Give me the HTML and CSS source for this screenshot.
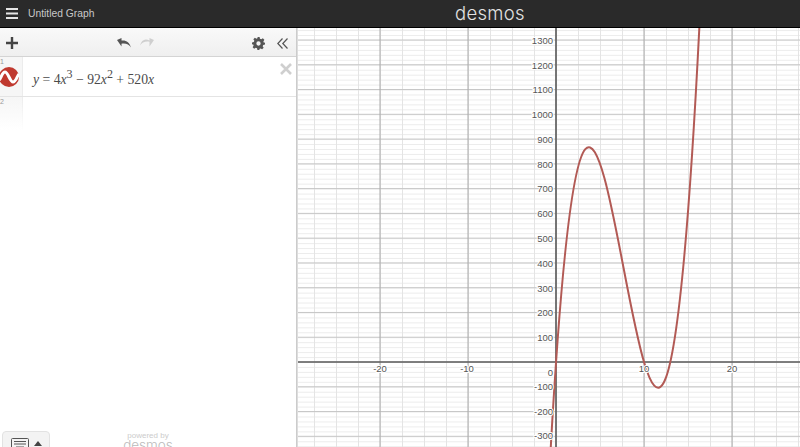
FILE: index.html
```html
<!DOCTYPE html>
<html lang="en">
<head>
  <meta charset="UTF-8" />
  <title>Untitled Graph</title>
  <link rel="stylesheet" href="styles.css">
</head>
<body>
  <header class="topbar">
    <svg class="menu-icon" width="12" height="11" viewBox="0 0 12 11"><path d="M0 0h12v2H0zM0 4.500h12v2H0zM0 9h12v2H0z"/></svg>
    <span class="graph-title">Untitled Graph</span>
    <span class="logo">desmos</span>
  </header>

  <main class="app">
    <section class="panel">
      <div class="toolbar">
        <svg class="icon-add" width="12" height="12" viewBox="0 0 13 13"><path d="M5.200 0h2.600v5.200H13v2.600H7.800V13H5.200V7.800H0V5.200h5.200z"/></svg>
        <div class="history">
          <svg width="14" height="11" viewBox="0 0 14 11"><path class="undo" d="M0 2l4.500-2v2.500c4.500-.6 8 1.500 9.500 7-2-3.200-5-4.400-9.500-3.800V8.500z"/></svg>
          <svg width="14" height="11" viewBox="0 0 14 11"><path class="redo" d="M14 2L9.500 0v2.500C5-.1 1.500 2 0 7.500c2-3.200 5-4.400 9.500-3.800V8.500z"/></svg>
        </div>
        <svg class="icon-gear" width="13" height="13" viewBox="0 0 24 24"><path d="M10 0h4l.7 3.300 2.400 1 2.900-1.800 2.800 2.800-1.800 2.900 1 2.400L24 10v4l-3.300.7-1 2.400 1.800 2.900-2.800 2.800-2.900-1.800-2.400 1L14 24h-4l-.7-3.300-2.400-1L4 21.500 1.200 18.700 3 15.800l-1-2.400L0 14v-4l3.300-.7 1-2.400L2.500 4l2.800-2.800 2.900 1.800 2.400-1zM12 8a4 4 0 1 0 0 8 4 4 0 0 0 0-8z" fill-rule="evenodd"/></svg>
        <svg class="icon-collapse" width="11" height="11" viewBox="0 0 11 11"><path d="M5.500.5L.8 5.500l4.700 5M10.500.5L5.800 5.500l4.700 5"/></svg>
      </div>

      <div class="expr">
        <div class="gutter">
          <span class="expr-num">1</span>
          <svg class="curve-badge" width="20" height="20" viewBox="0 0 20 20"><circle cx="10" cy="10" r="10"/><path d="M0 13c2-1 3-8 6-8s5 10 8 10 4-6 6-8"/></svg>
        </div>
        <div class="math"><i>y</i> = 4<i>x</i><sup>3</sup> − 92<i>x</i><sup>2</sup> + 520<i>x</i></div>
        <svg class="icon-remove" width="12" height="12" viewBox="0 0 12 12"><path d="M1 1l10 10M11 1L1 11"/></svg>
      </div>
      <div class="expr expr-empty">
        <div class="gutter gutter-fade"><span class="expr-num">2</span></div>
      </div>

      <div class="panel-foot">
        <div class="keypad-btn">
          <svg width="18" height="13" viewBox="0 0 18 13"><rect x=".5" y=".5" width="17" height="12" rx="1"/><path d="M3 3.500h12M3 6h12M5 9h8"/></svg>
          <span class="caret"></span>
        </div>
        <div class="powered">
          <div class="powered-by">powered by</div>
          <div class="powered-name">desmos</div>
        </div>
      </div>
    </section>

    <section class="graph">
      <svg class="graph-canvas" width="503" height="419" viewBox="0 0 503 419">
        <defs>
          <pattern id="minor" patternUnits="userSpaceOnUse" x="259" y="334" width="22" height="4.954">
            <rect width="22" height="1" fill="#ececec"/>
            <rect width="1" height="4.954" fill="#e4e4e4"/>
          </pattern>
          <pattern id="major" patternUnits="userSpaceOnUse" x="258.500" y="333.500" width="88" height="24.770">
            <rect width="88" height="1" fill="#c6c6c6"/>
            <rect width="1" height="24.770" fill="#aaa"/>
          </pattern>
        </defs>
        <rect width="503" height="419" fill="url(#minor)"/>
        <rect width="503" height="419" fill="url(#major)"/>
        <path class="axis" d="M0 334H503M259 0V419"/>
        <path class="curve" d="M250.200 486.600C303 -577.500 355.800 1140.500 408.600 -137.600"/>
        <g class="labels-y">
          <text x="256" y="16">1300</text>
          <text x="256" y="41">1200</text>
          <text x="256" y="65">1100</text>
          <text x="256" y="90">1000</text>
          <text x="256" y="115">900</text>
          <text x="256" y="140">800</text>
          <text x="256" y="164">700</text>
          <text x="256" y="189">600</text>
          <text x="256" y="214">500</text>
          <text x="256" y="239">400</text>
          <text x="256" y="264">300</text>
          <text x="256" y="288">200</text>
          <text x="256" y="313">100</text>
          <text x="256" y="348">0</text>
          <text x="256" y="362">-100</text>
          <text x="256" y="387">-200</text>
          <text x="256" y="411">-300</text>
        </g>
        <g class="labels-x">
          <text x="83" y="344">-20</text>
          <text x="170" y="344">-10</text>
          <text x="347" y="344">10</text>
          <text x="435" y="344">20</text>
        </g>
      </svg>
    </section>
  </main>
</body>
</html>
```

FILE: styles.css
```css
html,body{margin:0;height:100%;overflow:hidden;background:#fff}
body{font-family:"Liberation Sans",Arial,sans-serif;display:flex;flex-direction:column}

/* top bar */
.topbar{height:27px;flex:none;background:#2a2a2a;border-bottom:1px solid #000;display:flex;align-items:center;position:relative;padding-left:6px}
.menu-icon{fill:#e4e4e4}
.graph-title{margin-left:10px;font-size:10.300px;color:#c8c8c8}
.logo{position:absolute;left:455px;top:0;font-family:Inter,"Open Sans",sans-serif;font-size:18.500px;line-height:27px;font-weight:300;letter-spacing:.3px;color:#e2e2e2}

.app{flex:1;display:flex;min-height:0}

/* expression list */
.panel{width:296px;flex:none;border-right:1px solid #ccc;display:flex;flex-direction:column;overflow:hidden}
.toolbar{height:29px;flex:none;box-sizing:border-box;padding:2px 0 0 6px;background:linear-gradient(#f9f9f9,#efefef);border-bottom:1px solid #d4d4d4;display:flex;align-items:center}
.toolbar svg{flex:none}
.icon-add{fill:#444}
.history{display:flex;flex:none;gap:9px;margin-left:99px}
.undo{fill:#555}
.redo{fill:#cfcfcf}
.icon-gear{fill:#555;margin-left:98px}
.icon-collapse{fill:none;stroke:#555;stroke-width:1.200;margin-left:12px}

.expr{height:40px;flex:none;box-sizing:border-box;border-bottom:1px solid #e4e4e4;display:flex;position:relative}
.expr-empty{height:33px;border-bottom:0}
.gutter{width:22px;flex:none;background:#f6f6f6;border-right:1px solid #ececec;position:relative}
.gutter-fade{background:linear-gradient(#f6f6f6,#fff);border-image:linear-gradient(#ececec,#fff) 1}
.expr-num{position:absolute;left:0;top:0;font-size:7px;line-height:9px;color:#999}
.curve-badge{position:absolute;left:-1px;top:10px}
.curve-badge circle{fill:#c0392f}
.curve-badge path{fill:none;stroke:#fff;stroke-width:3}
.math{margin-left:10px;padding-top:13px;font-family:"Liberation Serif","Times New Roman",serif;font-size:13.700px;line-height:20px;color:#4a4a4a;white-space:nowrap}
.math sup{font-size:12px;line-height:0;vertical-align:6px}
.icon-remove{position:absolute;right:4px;top:6px;fill:none;stroke:#cfcfcf;stroke-width:2.600}

/* bottom of the panel */
.panel-foot{margin-top:auto;height:16px;flex:none;position:relative;overflow:hidden}
.keypad-btn{position:absolute;left:2px;top:0;width:48px;height:24px;box-sizing:border-box;background:#f3f3f3;border:1px solid #e2e2e2;border-radius:4px 4px 0 0;display:flex;gap:5px;padding:6px 0 0 8px}
.keypad-btn svg{fill:none;stroke:#555}
.caret{width:0;height:0;margin-top:3px;border:4px solid transparent;border-top:0;border-bottom:5px solid #444}
.powered{text-align:center;line-height:1;padding-top:1px}
.powered-by{font-size:8px;color:#ccc}
.powered-name{font-family:Inter,"Open Sans",sans-serif;font-size:13.500px;font-weight:300;color:#bbb;margin-top:-1px}

/* graph paper */
.graph{flex:1;min-width:0;overflow:hidden;border-left:1px solid #ddd}
.graph-canvas{display:block;margin-left:-1px}
.axis{fill:none;stroke:#5f5f5f;stroke-width:1.600}
.curve{fill:none;stroke:#b25a55;stroke-width:2}
.graph-canvas text{font-family:"Liberation Sans",Arial,sans-serif;font-size:9.500px;fill:#555;stroke:#fff;stroke-width:2px;paint-order:stroke}
.labels-y{text-anchor:end}
.labels-x{text-anchor:middle}
```
